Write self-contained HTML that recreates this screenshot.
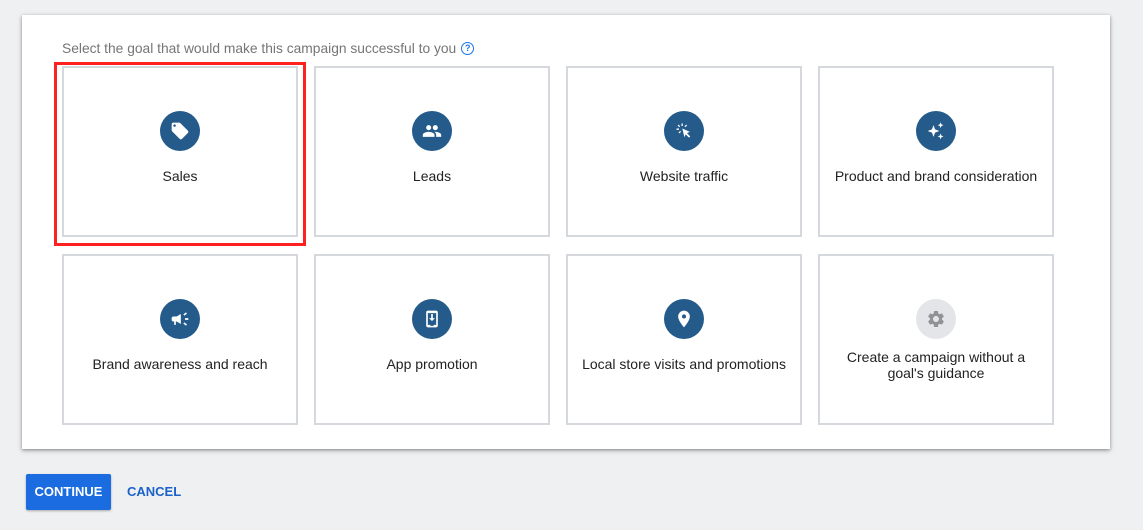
<!DOCTYPE html>
<html><head><meta charset="utf-8"><style>
*{box-sizing:border-box;margin:0;padding:0}
body{width:1143px;height:530px;background:#eff0f2;font-family:"Liberation Sans",Roboto,sans-serif;position:relative;overflow:hidden}
.panel{position:absolute;left:22px;top:15px;width:1088px;height:434px;background:#fff;box-shadow:0 1px 3px rgba(0,0,0,.35),0 2px 6px rgba(0,0,0,.15)}
.hint{position:absolute;left:62px;top:41px;font-size:13.8px;color:#757575}
.q{display:inline-block;width:13px;height:13px;border:1.5px solid #1a73e8;border-radius:50%;color:#1a73e8;font-size:9px;line-height:10px;text-align:center;font-weight:bold;vertical-align:2px;margin-left:5px}
.card{position:absolute;width:236px;height:171px;border:2px solid #d5d8dc;background:#fff}
.ic{position:absolute;left:96px;top:43px;width:40px;height:40px;border-radius:50%;background:#245b8b;display:flex;align-items:center;justify-content:center}
.ic svg{width:20px;height:20px;fill:#fff}
.ic.g{background:#e3e5e8}.ic.g svg{fill:#8f9296}
.lb{position:absolute;left:0;right:0;top:100px;text-align:center;font-size:14px;color:#222;line-height:16px;padding:0 10px}
.red{position:absolute;left:54px;top:62px;width:252px;height:184px;border:3px solid #ff2020}
.btn{position:absolute;left:26px;top:474px;width:85px;height:36px;background:#1a6ce0;border-radius:2px;color:#fff;font-size:13px;font-weight:bold;text-align:center;line-height:36px;box-shadow:0 1px 2px rgba(0,0,0,.3)}
.cancel{position:absolute;left:127px;top:474px;line-height:36px;font-size:13px;font-weight:bold;color:#1a62c9}
</style></head><body>
<div class="panel"></div>
<div class="hint">Select the goal that would make this campaign successful to you<span class="q">?</span></div>
<div class="red"></div>

<div class="card" style="left:62px;top:66px"><div class="ic"><svg viewBox="0 0 24 24"><path d="M21.41 11.58l-9-9C12.05 2.22 11.55 2 11 2H4c-1.1 0-2 .9-2 2v7c0 .55.22 1.05.59 1.420l9 9c.36.36.86.58 1.41.58.55 0 1.05-.22 1.41-.59l7-7c.37-.36.59-.86.59-1.41 0-.55-.23-1.06-.59-1.42zM5.5 7C4.67 7 4 6.33 4 5.5S4.67 4 5.5 4 7 4.67 7 5.5 6.33 7 5.5 7z"/></svg></div><div class="lb">Sales</div></div>
<div class="card" style="left:314px;top:66px"><div class="ic"><svg viewBox="0 0 24 24"><path d="M16 11c1.66 0 2.99-1.34 2.99-3S17.66 5 16 5c-1.66 0-3 1.34-3 3s1.34 3 3 3zm-8 0c1.66 0 2.99-1.34 2.99-3S9.66 5 8 5C6.34 5 5 6.34 5 8s1.34 3 3 3zm0 2c-2.33 0-7 1.17-7 3.5V19h14v-2.5c0-2.33-4.67-3.5-7-3.5zm8 0c-.29 0-.62.02-.97.05 1.16.84 1.970 1.97 1.97 3.45V19h6v-2.5c0-2.33-4.67-3.5-7-3.5z"/></svg></div><div class="lb">Leads</div></div>
<div class="card" style="left:566px;top:66px"><div class="ic"><svg viewBox="0 0 24 24"><path d="M10 9l9 4-3.5 1.5 4 4-1.5 1.5-4-4L12.5 19.5z"/><path d="M9 3h1.6v3H9zM3 9h3v1.6H3zM4.3 5.4l1.1-1.1 2 2-1.1 1.1zM12.6 6.3l2-2 1.1 1.1-2 2zM5.4 13.8l2-2 1.1 1.1-2 2z"/></svg></div><div class="lb">Website traffic</div></div>
<div class="card" style="left:818px;top:66px"><div class="ic"><svg viewBox="0 0 24 24"><path d="M9 5l1.9 5.1L16 12l-5.1 1.9L9 19l-1.9-5.1L2 12l5.1-1.9zM17.5 1.5l1 2.5 2.5 1-2.5 1-1 2.5-1-2.5-2.5-1 2.5-1zM17.5 15l1 2.5 2.5 1-2.5 1-1 2.5-1-2.5-2.5-1 2.5-1z"/></svg></div><div class="lb">Product and brand consideration</div></div>

<div class="card" style="left:62px;top:254px"><div class="ic"><svg viewBox="0 0 24 24"><path d="M18 11v2h4v-2h-4zm-2 6.61c.96.71 2.21 1.65 3.2 2.39.4-.53.8-1.07 1.2-1.6-.99-.74-2.24-1.68-3.2-2.4-.4.54-.8 1.08-1.2 1.61zM20.4 5.6c-.4-.53-.8-1.07-1.2-1.6-.99.74-2.24 1.68-3.2 2.4.4.53.8 1.07 1.2 1.6.96-.72 2.21-1.65 3.2-2.4zM4 9c-1.1 0-2 .9-2 2v2c0 1.1.9 2 2 2h1v4h2v-4h1l5 3V6L8 9H4z"/></svg></div><div class="lb">Brand awareness and reach</div></div>
<div class="card" style="left:314px;top:254px"><div class="ic"><svg viewBox="0 0 24 24"><path d="M7 2h10c1.1 0 2 .9 2 2v16c0 1.1-.9 2-2 2H7c-1.1 0-2-.9-2-2V4c0-1.1.9-2 2-2zm0 3v14h10V5H7zm4 1h2v5h2.5L12 14.5 8.5 11H11zm-1 14.3h4v-1.3h-4z"/></svg></div><div class="lb">App promotion</div></div>
<div class="card" style="left:566px;top:254px"><div class="ic"><svg viewBox="0 0 24 24"><path d="M12 2C8.13 2 5 5.13 5 9c0 5.25 7 13 7 13s7-7.75 7-13c0-3.87-3.13-7-7-7zm0 9.5c-1.38 0-2.5-1.12-2.5-2.5s1.12-2.5 2.5-2.5 2.5 1.12 2.5 2.5-1.12 2.5-2.5 2.5z"/></svg></div><div class="lb">Local store visits and promotions</div></div>
<div class="card" style="left:818px;top:254px"><div class="ic g"><svg viewBox="0 0 24 24"><path d="M19.14 12.94c.04-.3.06-.61.06-.94 0-.32-.02-.64-.07-.94l2.03-1.58a.49.49 0 00.12-.61l-1.92-3.32a.488.488 0 00-.59-.22l-2.39.96c-.5-.38-1.03-.7-1.62-.94l-.36-2.54a.484.484 0 00-.48-.41h-3.84c-.24 0-.43.17-.47.41l-.36 2.54c-.59.24-1.13.57-1.62.94l-2.39-.96c-.22-.08-.47 0-.59.22L2.74 8.87c-.12.21-.08.47.12.61l2.03 1.58c-.05.3-.09.63-.09.94s.02.64.07.94l-2.03 1.58a.49.49 0 00-.12.61l1.92 3.32c.12.22.37.29.59.22l2.39-.96c.5.38 1.03.7 1.62.94l.36 2.54c.05.24.24.41.48.41h3.84c.24 0 .44-.17.47-.41l.36-2.54c.59-.24 1.13-.56 1.62-.94l2.39.96c.22.08.47 0 .59-.22l1.92-3.32c.12-.22.07-.47-.12-.61l-2.01-1.58zM12 15.6c-1.98 0-3.6-1.62-3.6-3.6s1.62-3.6 3.6-3.6 3.6 1.62 3.6 3.6-1.62 3.6-3.6 3.6z"/></svg></div><div class="lb" style="top:93px">Create a campaign without a goal's guidance</div></div>

<div class="btn">CONTINUE</div>
<div class="cancel">CANCEL</div>
</body></html>
